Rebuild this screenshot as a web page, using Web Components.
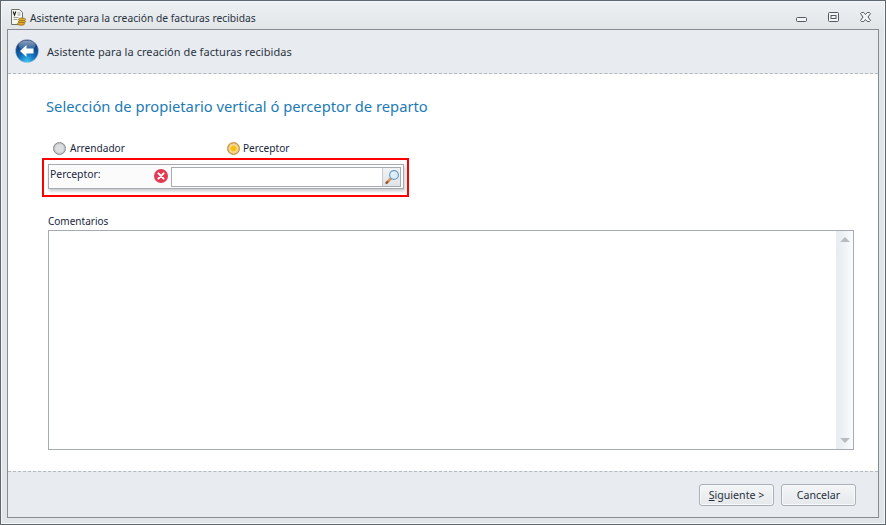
<!DOCTYPE html>
<html lang="es">
<head>
<meta charset="utf-8">
<title>Asistente</title>
<style>
  html, body { margin: 0; height: 100%; background: #e3e7ea; }
  body { font: 10.3px "Noto Sans", "Open Sans", sans-serif; color: #1b2738; overflow: hidden; }
</style>
</head>
<body>
<wiz-window caption="Asistente para la creación de facturas recibidas">
  <wiz-header>Asistente para la creación de facturas recibidas</wiz-header>
  <wiz-body>
    <h1 slot="heading">Selección de propietario vertical ó perceptor de reparto</h1>
    <wiz-radio slot="radios" style="width:174px">Arrendador</wiz-radio>
    <wiz-radio slot="radios" checked>Perceptor</wiz-radio>
    <wiz-lookup slot="lookup" label="Perceptor:"></wiz-lookup>
    <wiz-memo slot="memo" label="Comentarios"></wiz-memo>
  </wiz-body>
  <wiz-footer>
    <wiz-button><u>S</u>iguiente &gt;</wiz-button>
    <wiz-button>Cancelar</wiz-button>
  </wiz-footer>
</wiz-window>

<script>
// outer form: caption bar plus the bordered panel
class WizWindow extends HTMLElement {
  constructor() {
    super();
    this.attachShadow({mode: 'open'});
    this.shadowRoot.innerHTML = `
      <style>
        :host { display: flex; flex-direction: column; box-sizing: border-box; width: 886px; height: 525px;
                border: 1px solid #5f676e; box-shadow: inset 0 0 0 1px #f4f6f7;
                background: linear-gradient(#eef1f4, #e1e5e8 29px, #e1e5e8); padding: 0 6px 6px 6px; }
        .bar { display: flex; align-items: center; box-sizing: border-box; height: 28px; padding-top: 5px; flex: none; }
        .ico { width: 18px; height: 18px; margin: -2px 2px 0 3px; flex: none; }
        .cap { flex: 1; font-size: 10.27px; color: #27323f; }
        .ctl { display: flex; align-items: center; margin-right: 7px; }
        .ctl svg { display: block; width: 13px; height: 13px; margin-left: 19px; }
        .panel { flex: 1; display: flex; flex-direction: column; border: 1px solid #858c92; min-height: 0; }
      </style>
      <div class="bar">
        <svg class="ico" viewBox="0 0 18 18">
          <path d="M1.5 1.5h8l3 3v12h-11z" fill="#f6f7f2" stroke="#6d7268"/>
          <path d="M3.2 3.5l1.3 3.6 1.3-3.6" fill="none" stroke="#1c1c1c" stroke-width="1.1"/>
          <path d="M7.5 5h3M7.5 7h3M3.5 9.5h5M3.5 11.5h4" stroke="#9aa19a"/>
          <ellipse cx="12" cy="11.5" rx="3.6" ry="1.5" fill="#e8b83e" stroke="#8f6a14" stroke-width=".8"/>
          <ellipse cx="12" cy="13.6" rx="3.6" ry="1.5" fill="#e2ab2e" stroke="#8f6a14" stroke-width=".8"/>
          <ellipse cx="11" cy="15.7" rx="3.6" ry="1.5" fill="#e2ab2e" stroke="#8f6a14" stroke-width=".8"/>
        </svg>
        <span class="cap"></span>
        <div class="ctl">
          <svg viewBox="0 0 13 13"><rect x="1.5" y="6.5" width="10" height="4" rx="1" fill="#f3f5f6" stroke="#525a63"/></svg>
          <svg viewBox="0 0 13 13"><rect x="1.5" y="1.5" width="10" height="9" rx="1" fill="#f3f5f6" stroke="#525a63"/><rect x="4" y="4.5" width="5" height="3" fill="#f3f5f6" stroke="#525a63"/></svg>
          <svg viewBox="0 0 13 13"><path d="M1.5 2.5l1-1h2.2l1.8 2 1.8-2h2.2l1 1-2.5 3.5 2.5 3.5-1 1h-2.2l-1.8-2-1.8 2H2.5l-1-1L4 6z" fill="#f3f5f6" stroke="#525a63"/></svg>
        </div>
      </div>
      <div class="panel"><slot></slot></div>`;
    this.shadowRoot.querySelector('.cap').textContent = this.getAttribute('caption');
  }
}

class WizHeader extends HTMLElement {
  constructor() {
    super();
    this.attachShadow({mode: 'open'});
    this.shadowRoot.innerHTML = `
      <style>
        :host { display: flex; align-items: center; flex: none; height: 44px; box-sizing: border-box;
                background: #e8ebef; border-bottom: 1px dashed #b4b9bd; padding: 0 0 1px 7px;
                font-size: 11px; color: #2a3442; letter-spacing: .06px; }
        svg { width: 24px; height: 24px; margin: 0 8px 1px 0; flex: none; }
      </style>
      <svg viewBox="0 0 24 24">
        <defs>
          <radialGradient id="g" cx=".5" cy=".95" r=".9">
            <stop offset="0" stop-color="#35c3f2"/><stop offset=".45" stop-color="#1168b4"/><stop offset="1" stop-color="#0c2d6b"/>
          </radialGradient>
          <linearGradient id="s" x1="0" y1="0" x2="0" y2="1">
            <stop offset="0" stop-color="#fff" stop-opacity=".55"/><stop offset="1" stop-color="#fff" stop-opacity=".05"/>
          </linearGradient>
        </defs>
        <circle cx="12" cy="12" r="11.5" fill="url(#g)" stroke="#c8d3df" stroke-width=".5"/>
        <ellipse cx="12" cy="6.5" rx="8.5" ry="5" fill="url(#s)"/>
        <path d="M5 12l6.5-6v3.6h7v4.8h-7V18z" fill="#fff"/>
      </svg>
      <slot></slot>`;
  }
}

class WizBody extends HTMLElement {
  constructor() {
    super();
    this.attachShadow({mode: 'open'});
    this.shadowRoot.innerHTML = `
      <style>
        :host { display: block; flex: 1; background: #fff; padding: 20px 24px 0 34px; min-height: 0; }
        ::slotted(h1) { margin: 0 0 22px 4px; font: 400 14.72px/24px "Noto Sans", "Open Sans", sans-serif; color: #1c7bb5; }
        .radios { display: flex; height: 16px; margin-left: 11px; }
        .hl { box-sizing: border-box; width: 367px; height: 39px; margin: 2px 0 0 0; border: 2px solid #f00; padding: 4px 3px 0 4px; }
        .memo { margin: 16px 0 0 6px; }
      </style>
      <slot name="heading"></slot>
      <div class="radios"><slot name="radios"></slot></div>
      <div class="hl"><slot name="lookup"></slot></div>
      <div class="memo"><slot name="memo"></slot></div>`;
  }
}

class WizRadio extends HTMLElement {
  constructor() {
    super();
    this.attachShadow({mode: 'open'});
    const on = this.hasAttribute('checked');
    this.shadowRoot.innerHTML = `
      <style>
        :host { display: flex; align-items: center; font-size: 10.1px; color: #1a2640; }
        i { display: block; box-sizing: border-box; width: 13px; height: 13px; margin-right: ${on ? 3 : 4}px; border-radius: 50%; flex: none; }
        .off { border: 1px solid #868b8f; background: radial-gradient(circle, #dcdee0 0 45%, #b5b9bc 78%, #e4e6e7 100%); }
        .on { border: 1px solid #c4913c; background: radial-gradient(circle, #f7bf10 0 32%, #f7e3b4 48%, #e4a94c 72%, #fbeed2 100%); }
      </style>
      <i class="${on ? 'on' : 'off'}"></i><span><slot></slot></span>`;
  }
}

class WizLookup extends HTMLElement {
  constructor() {
    super();
    this.attachShadow({mode: 'open'});
    this.shadowRoot.innerHTML = `
      <style>
        :host { display: flex; box-sizing: border-box; height: 25px; border: 1px solid #a6abb2;
                background: #fbfbfc; box-shadow: 1px 2px 3px rgba(90,95,100,.35); padding: 2px 2px 0 1px; font-size: 10.4px; color: #1a2640; }
        .lbl { width: 104px; flex: none; line-height: 11px; padding-top: 2px; }
        .err { width: 14px; height: 14px; margin: 2px 3px 0 0; flex: none; }
        .box { flex: 1; display: flex; box-sizing: border-box; height: 20px; border: 1px solid #a6abb2; background: #fff; }
        .txt { flex: 1; }
        .btn { display: flex; align-items: center; justify-content: center; width: 17px; flex: none;
               border-left: 1px solid #c6cacf; background: linear-gradient(#f1f3f5, #dfe3e7); }
        .btn svg { width: 16px; height: 16px; }
      </style>
      <div class="lbl"></div>
      <svg class="err" viewBox="0 0 14 14">
        <circle cx="7" cy="7" r="7" fill="#e23a55"/>
        <path d="M4.4 4.4l5.2 5.2M9.6 4.4l-5.2 5.2" stroke="#fff" stroke-width="2" stroke-linecap="round"/>
      </svg>
      <div class="box"><div class="txt"></div>
        <div class="btn"><svg viewBox="0 0 16 16">
          <path d="M7 9.4l-4 4" stroke="#e08f4e" stroke-width="2.6" stroke-linecap="round"/>
          <path d="M2.4 14l1-1" stroke="#8a5a3a" stroke-width="2.2" stroke-linecap="round"/>
          <circle cx="10" cy="6" r="4.4" fill="#d8eefb" stroke="#6f9dc0" stroke-width="1.2"/>
          <path d="M7.6 5.6a2.6 2.6 0 0 1 2.2-2.2" fill="none" stroke="#fff" stroke-width="1"/>
        </svg></div>
      </div>`;
    this.shadowRoot.querySelector('.lbl').textContent = this.getAttribute('label');
  }
}

class WizMemo extends HTMLElement {
  constructor() {
    super();
    this.attachShadow({mode: 'open'});
    this.shadowRoot.innerHTML = `
      <style>
        :host { display: block; font-size: 10px; color: #1a2640; }
        .lbl { height: 16px; line-height: 17px; margin-bottom: 1px; }
        .area { display: flex; justify-content: flex-end; box-sizing: border-box; width: 806px; height: 220px;
                border: 1px solid #a6abb2; background: #fff; }
        .bar { display: flex; flex-direction: column; justify-content: space-between; align-items: center; width: 17px;
               padding: 6px 0; box-sizing: border-box; background: linear-gradient(90deg, #e6ebef, #fafbfc); }
        .up, .down { width: 0; height: 0; border-left: 5px solid transparent; border-right: 5px solid transparent; }
        .up { border-bottom: 5px solid #b9bdc1; }
        .down { border-top: 5px solid #b9bdc1; }
      </style>
      <div class="lbl"></div>
      <div class="area"><div class="bar"><div class="up"></div><div class="down"></div></div></div>`;
    this.shadowRoot.querySelector('.lbl').textContent = this.getAttribute('label');
  }
}

class WizFooter extends HTMLElement {
  constructor() {
    super();
    this.attachShadow({mode: 'open'});
    this.shadowRoot.innerHTML = `
      <style>
        :host { display: flex; justify-content: flex-end; gap: 7px; flex: none; height: 46px; box-sizing: border-box;
                background: #e8ebef; border-top: 1px dashed #b4b9bd; padding: 12px 22px 0 0; }
      </style>
      <slot></slot>`;
  }
}

class WizButton extends HTMLElement {
  constructor() {
    super();
    this.attachShadow({mode: 'open'});
    this.shadowRoot.innerHTML = `
      <style>
        :host { display: flex; align-items: center; justify-content: center; box-sizing: border-box; width: 75px; height: 22px;
                border: 1px solid #aab0b6; border-radius: 3px; font-size: 10.6px; color: #26303c;
                background: linear-gradient(#f3f5f7, #e6e9ec); box-shadow: inset 0 0 0 1px #f8f9fa; }
      </style>
      <slot></slot>`;
  }
}

customElements.define('wiz-window', WizWindow);
customElements.define('wiz-header', WizHeader);
customElements.define('wiz-body', WizBody);
customElements.define('wiz-radio', WizRadio);
customElements.define('wiz-lookup', WizLookup);
customElements.define('wiz-memo', WizMemo);
customElements.define('wiz-footer', WizFooter);
customElements.define('wiz-button', WizButton);
</script>
</body>
</html>
